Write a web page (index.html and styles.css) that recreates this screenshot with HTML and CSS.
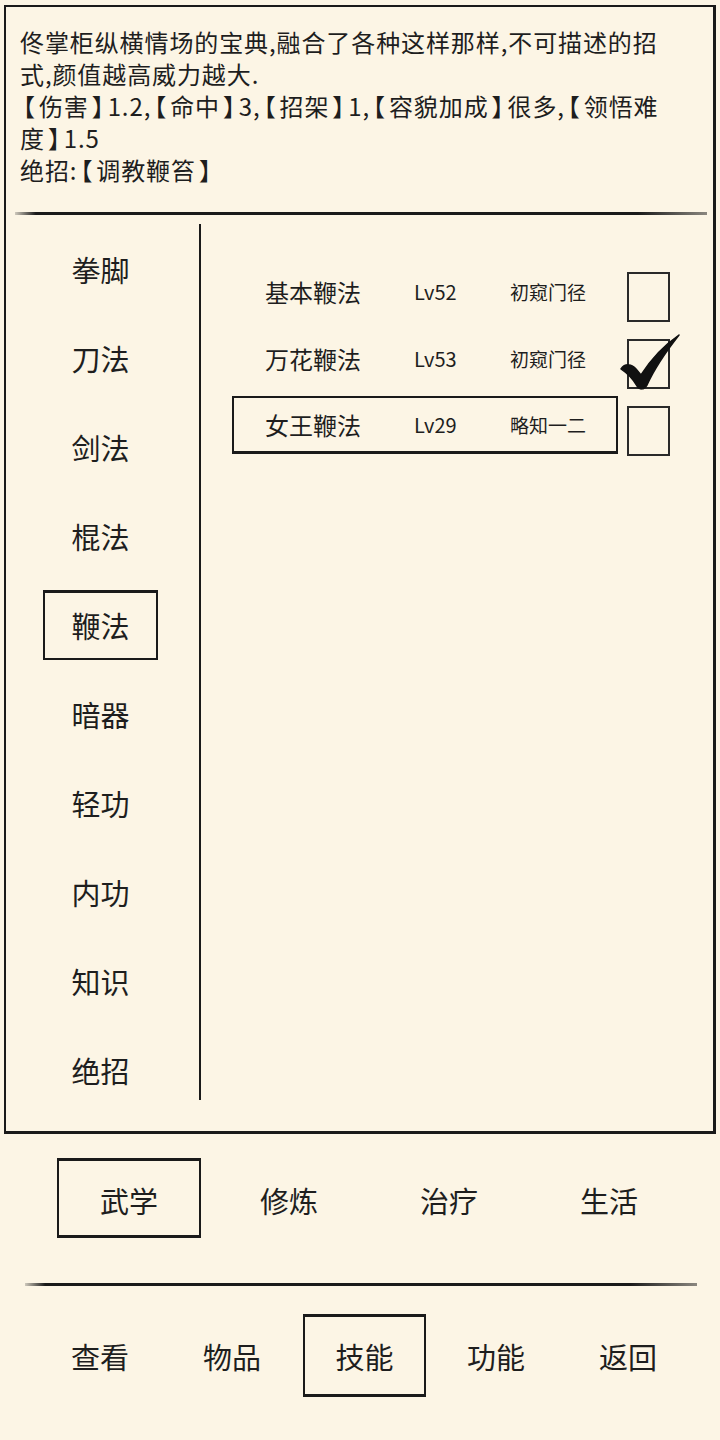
FILE: index.html
```html
<!DOCTYPE html>
<html lang="zh-CN">
<head>
  <meta charset="UTF-8">
  <meta name="viewport" content="width=device-width, initial-scale=1.0">
  <title>技能 - 武学</title>
  <link rel="stylesheet" href="styles.css">
</head>
<body>
  <div class="panel">
    <div class="desc">
      <div>佟掌柜纵横情场的宝典,融合了各种这样那样,不可描述的招</div>
      <div>式,颜值越高威力越大.</div>
      <div><span class="bk">【</span>伤害<span class="bk">】</span>1.2,<span class="bk">【</span>命中<span class="bk">】</span>3,<span class="bk">【</span>招架<span class="bk">】</span>1,<span class="bk">【</span>容貌加成<span class="bk">】</span>很多,<span class="bk">【</span>领悟难</div>
      <div>度<span class="bk">】</span>1.5</div>
      <div>绝招:<span class="bk">【</span>调教鞭笞<span class="bk">】</span></div>
    </div>
    <div class="rule"></div>

    <div class="main">
      <div class="nav">
        <div class="nav-item"><span>拳脚</span></div>
        <div class="nav-item"><span>刀法</span></div>
        <div class="nav-item"><span>剑法</span></div>
        <div class="nav-item"><span>棍法</span></div>
        <div class="nav-item active"><span>鞭法</span></div>
        <div class="nav-item"><span>暗器</span></div>
        <div class="nav-item"><span>轻功</span></div>
        <div class="nav-item"><span>内功</span></div>
        <div class="nav-item"><span>知识</span></div>
        <div class="nav-item"><span>绝招</span></div>
      </div>

      <div class="skills">
        <div class="skill-row">
          <div class="skill-cell">
            <span class="skill-name">基本鞭法</span>
            <span class="skill-lv">Lv52</span>
            <span class="skill-grade">初窥门径</span>
          </div>
          <div class="check"></div>
        </div>
        <div class="skill-row">
          <div class="skill-cell">
            <span class="skill-name">万花鞭法</span>
            <span class="skill-lv">Lv53</span>
            <span class="skill-grade">初窥门径</span>
          </div>
          <div class="check checked">
            <svg class="tick" width="60" height="56" viewBox="0 0 60 56">
              <path d="M1 35 C5 29 12 30 16 35 L21 41 C31 25 43 12 59 1 C48 15 36 31 27 51 C24 56 19 56 17 52 C13 45 7 39 1 35 Z" fill="#111" stroke="#111" stroke-width="1.5" stroke-linejoin="round"/>
            </svg>
          </div>
        </div>
        <div class="skill-row">
          <div class="skill-cell selected">
            <span class="skill-name">女王鞭法</span>
            <span class="skill-lv">Lv29</span>
            <span class="skill-grade">略知一二</span>
          </div>
          <div class="check"></div>
        </div>
      </div>
    </div>
  </div>

  <div class="tabs">
    <div class="tab active"><span>武学</span></div>
    <div class="tab"><span>修炼</span></div>
    <div class="tab"><span>治疗</span></div>
    <div class="tab"><span>生活</span></div>
  </div>

  <div class="rule bottom-rule"></div>

  <div class="menu">
    <div class="menu-item"><span>查看</span></div>
    <div class="menu-item"><span>物品</span></div>
    <div class="menu-item active"><span>技能</span></div>
    <div class="menu-item"><span>功能</span></div>
    <div class="menu-item"><span>返回</span></div>
  </div>
</body>
</html>
```

FILE: styles.css
```css
body {
  margin: 0;
  background-color: #fcf5e5;
  color: #1e1e1e;
  font-family: "Noto Sans CJK SC", "Noto Sans", sans-serif;
  width: 720px;
  height: 1440px;
  overflow: hidden;
}

.panel {
  box-sizing: border-box;
  margin: 5px 4px 0 4px;
  height: 1129px;
  border: 2px solid #1a1a1a;
  border-right-width: 3px;
  border-bottom-width: 3px;
  display: flex;
  flex-direction: column;
}

.desc {
  padding: 19px 10px 0 14px;
  font-size: 24px;
  letter-spacing: 0.9px;
  line-height: 32px;
  white-space: nowrap;
}

/* narrow the square brackets like the game font does */
.bk {
  font-feature-settings: "halt";
  margin: 0 3px;
}

/* brush-like line, fading at both ends */
.rule {
  height: 3px;
  margin: 26px 6px 0 9px;
  background: linear-gradient(to right, rgba(26,26,26,0.2) 0%, #1a1a1a 3%, #1a1a1a 90%, rgba(26,26,26,0.5) 100%);
}

.main {
  display: flex;
  margin-top: 9px;
}

.nav {
  width: 193px;
  border-right: 2px solid #1a1a1a;
  height: 876px;
}

.nav-item {
  height: 89px;
  display: flex;
  align-items: center;
  justify-content: center;
  font-size: 29px;
  padding-right: 4px;
}

.nav-item.active span {
  box-sizing: border-box;
  width: 115px;
  height: 70px;
  border: 2px solid #1a1a1a;
  border-top-width: 3px;
  display: flex;
  align-items: center;
  justify-content: center;
}

.skills {
  flex: 1;
  padding-top: 38px;
}

.skill-row {
  display: flex;
  align-items: center;
  height: 58px;
  margin: 0 0 9px 31px;
}

.skill-cell {
  box-sizing: border-box;
  width: 386px;
  height: 58px;
  padding-left: 31px;
  border: 2px solid transparent;
  display: flex;
  align-items: center;
}

.skill-cell.selected {
  border-color: #1a1a1a;
  border-bottom-width: 3px;
}

.skill-name {
  width: 149px;
  font-size: 24px;
}

.skill-lv {
  width: 96px;
  font-size: 20px;
}

.skill-grade {
  font-size: 19px;
}

.check {
  box-sizing: border-box;
  width: 43px;
  height: 50px;
  margin: 12px 0 0 9px;
  border: 2px solid #2a2a2a;
  position: relative;
}

.tick {
  position: absolute;
  left: -9px;
  top: -7px;
}

.tabs {
  display: flex;
  margin-top: 24px;
  padding-left: 50px;
}

.tab {
  width: 160px;
  height: 80px;
  display: flex;
  align-items: center;
  justify-content: center;
  font-size: 29px;
}

.tab span {
  margin-top: 4px;
}

.tab.active {
  box-sizing: border-box;
  width: 144px;
  margin: 0 8px 0 7px;
  border: 2px solid #1a1a1a;
  border-top-width: 3px;
  border-bottom-width: 3px;
}

.bottom-rule {
  margin: 45px 23px 0 25px;
}

.menu {
  display: flex;
  margin-top: 28px;
  padding-left: 34px;
}

.menu-item {
  width: 132px;
  height: 83px;
  display: flex;
  align-items: center;
  justify-content: center;
  font-size: 29px;
}

.menu-item.active {
  box-sizing: border-box;
  width: 123px;
  margin: 0 4px 0 5px;
  border: 2px solid #1a1a1a;
  border-top-width: 3px;
  border-bottom-width: 3px;
}
```
